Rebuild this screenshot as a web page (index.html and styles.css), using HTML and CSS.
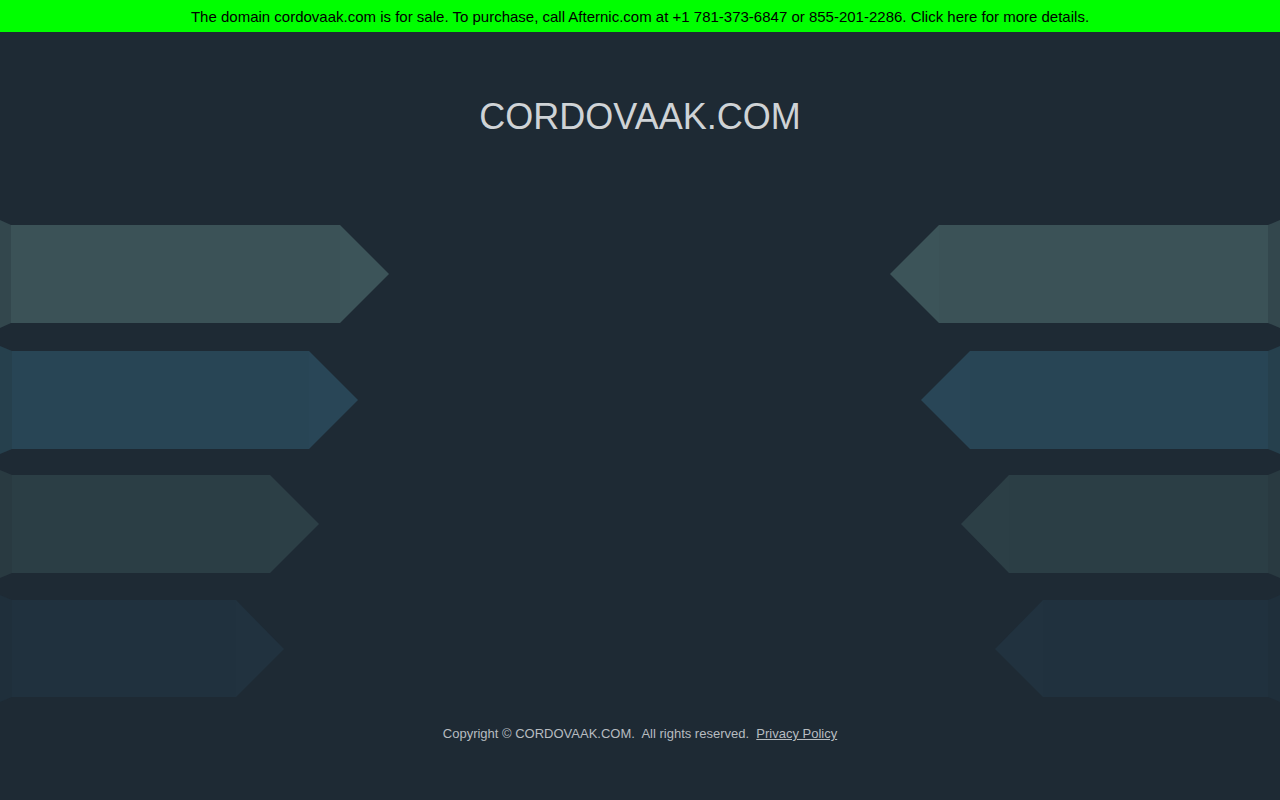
FILE: index.html
```html
<!DOCTYPE html>
<html lang="en">
<head>
<meta charset="utf-8">
<title>cordovaak.com</title>
<link rel="stylesheet" href="styles.css">
</head>
<body>
<div class="salebar"><a href="#">The domain cordovaak.com is for sale. To purchase, call Afternic.com at +1 781-373-6847 or 855-201-2286. Click here for more details.</a></div>
<h1 class="title">CORDOVAAK.COM</h1>
<div class="arrows">
  <svg class="side" width="400" height="490" viewBox="0 0 400 490">
    <g>
      <polygon points="0,5 11,10 11,108 0,113" fill="#33474d"/>
      <polygon points="11,10 340,10 340,108 11,108" fill="#3b5257"/>
      <polygon points="340,10 389,59 340,108" fill="#3c5459"/>
    </g>
    <g>
      <polygon points="0,131 12,136 12,234 0,239" fill="#26404d"/>
      <polygon points="12,136 309,136 309,234 12,234" fill="#284555"/>
      <polygon points="309,136 358,185 309,234" fill="#294657"/>
    </g>
    <g>
      <polygon points="0,255 12,260 12,358 0,363" fill="#293a41"/>
      <polygon points="12,260 270,260 270,358 12,358" fill="#2b3e45"/>
      <polygon points="270,260 319,309 270,358" fill="#2c3f46"/>
    </g>
    <g>
      <polygon points="0,380 12,385 12,482 0,487" fill="#1f2f3b"/>
      <polygon points="12,385 236,385 236,482 12,482" fill="#20313e"/>
      <polygon points="236,385 284,434 236,482" fill="#21323f"/>
    </g>
  </svg>
  <svg class="side flip" width="400" height="490" viewBox="0 0 400 490">
    <g>
      <polygon points="0,5 12,10 12,108 0,113" fill="#33474d"/>
      <polygon points="12,10 341,10 341,108 12,108" fill="#3b5257"/>
      <polygon points="341,10 390,59 341,108" fill="#3c5459"/>
    </g>
    <g>
      <polygon points="0,131 12,136 12,234 0,239" fill="#26404d"/>
      <polygon points="12,136 310,136 310,234 12,234" fill="#284555"/>
      <polygon points="310,136 359,185 310,234" fill="#294657"/>
    </g>
    <g>
      <polygon points="0,255 12,260 12,358 0,363" fill="#293a41"/>
      <polygon points="12,260 271,260 271,358 12,358" fill="#2b3e45"/>
      <polygon points="271,260 319,309 271,358" fill="#2c3f46"/>
    </g>
    <g>
      <polygon points="0,380 12,385 12,482 0,487" fill="#1f2f3b"/>
      <polygon points="12,385 237,385 237,482 12,482" fill="#20313e"/>
      <polygon points="237,385 285,434 237,482" fill="#21323f"/>
    </g>
  </svg>
</div>
<footer class="footer">Copyright © CORDOVAAK.COM.&nbsp; All rights reserved.&nbsp; <a href="#">Privacy Policy</a></footer>
</body>
</html>
```
FILE: styles.css
```css
html, body {
  margin: 0;
  padding: 0;
  background: #1e2a34;
  height: 100%;
}
body {
  font-family: "Liberation Sans", Arial, sans-serif;
  overflow: hidden;
}
.salebar {
  height: 32px;
  line-height: 34px;
  overflow: hidden;
  background: #00ff00;
  text-align: center;
  font-size: 15px;
}
.salebar a {
  color: #000;
  text-decoration: none;
}
.title {
  margin: 64px 0 0;
  font-size: 36px;
  line-height: 41px;
  font-weight: normal;
  color: #cfd3d6;
  text-align: center;
}
.arrows {
  margin-top: 78px;
  display: flex;
  justify-content: space-between;
  height: 490px;
}
.side {
  display: block;
}
.flip {
  transform: scaleX(-1);
}
.footer {
  margin-top: 21px;
  text-align: center;
  font-size: 13px;
  line-height: 15px;
  color: #b7bcc0;
}
.footer a {
  color: #b7bcc0;
  text-decoration: underline;
}
```
